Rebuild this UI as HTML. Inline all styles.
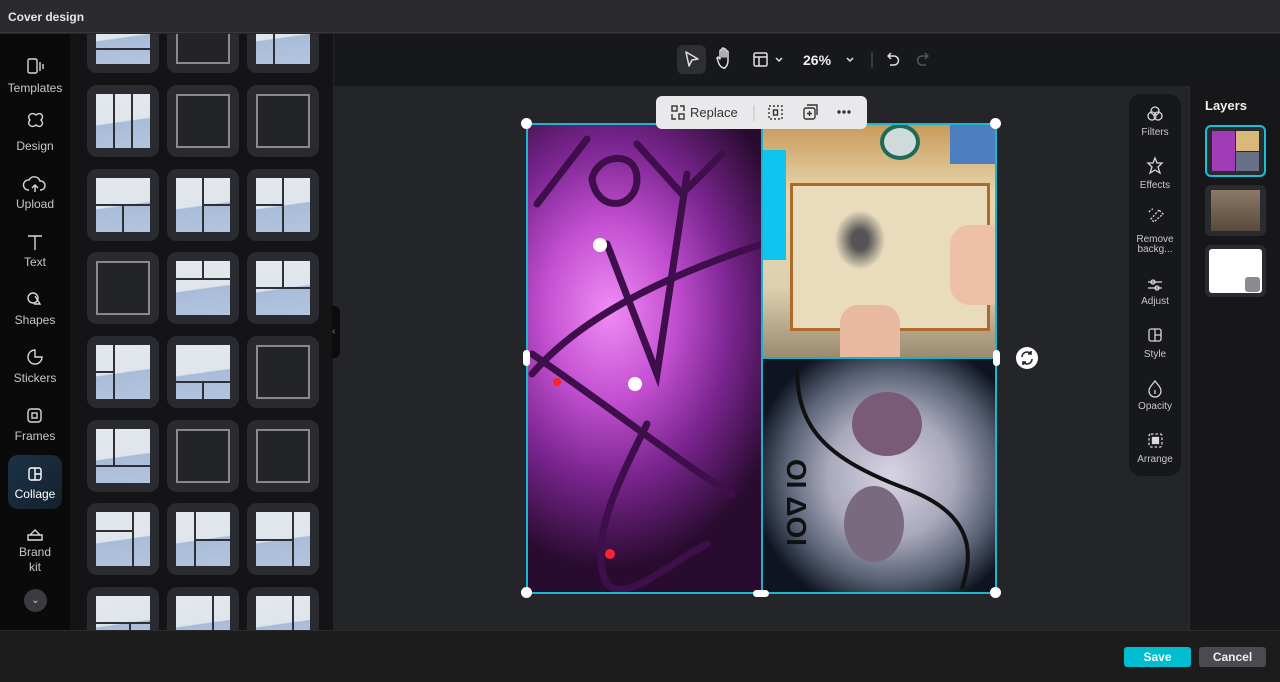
<!DOCTYPE html><html><head><meta charset="utf-8"><style>
*{box-sizing:border-box;margin:0;padding:0}
body{width:1280px;height:682px;overflow:hidden;background:#242529;font-family:"Liberation Sans",sans-serif;position:relative;color:#ddd}
.a{position:absolute}
.card{position:absolute;width:72px;height:72px;border-radius:10px;background:#2a2b30}
.th{position:absolute;left:9px;top:9px;width:54px;height:54px;overflow:hidden}
.sky{background:linear-gradient(172deg,#e4e8ee 0,#dfe5ec 50%,#a8bcda 52%,#b3c4de 100%)}
.emp{background:#232428;border:2px solid #8a8a8a}
.ln{position:absolute;background:#2e3035}
.v{width:2px;top:0;bottom:0}.h{height:2px;left:0;right:0}
.rl{position:absolute;left:0;width:70px;text-align:center;font-size:12px;color:#c8c8c8}
.tl{position:absolute;left:1129px;width:52px;text-align:center;font-size:10px;color:#c8c8c8;line-height:10px}
svg{position:absolute}
</style></head><body>
<div class="a" style="left:0;top:0;width:1280px;height:33px;background:#2b2b2f;border-bottom:1px solid #3a3a3e"></div>
<div class="a" style="left:8px;top:10px;font-size:12px;font-weight:bold;color:#e6e6e6">Cover design</div>
<div class="a" style="left:0;top:34px;width:70px;height:596px;background:#0a0a0b"></div>
<div class="a" style="left:8px;top:455px;width:54px;height:54px;border-radius:10px;background:linear-gradient(135deg,#1b3248,#15202c)"></div>
<svg width="70" height="596" style="left:0;top:34px" fill="none" stroke="#d8d8d8" stroke-width="1.4">
<rect x="28" y="25" width="9" height="14" rx="1.5"/><path d="M40 28v9M43 30v5"/>
<path d="M30 86c-4-4 2-9 6-5 4-4 9 1 5 5 4 4-1 9-5 5-4 4-10-1-6-5z"/>
<path d="M29 156h-1a5 5 0 0 1 1-10 6 6 0 0 1 11 1 4 4 0 0 1 1 9h-1M35 158v-7M32 154l3-3 3 3"/>
<path d="M28 202h14M35 202v14"/>
<circle cx="33" cy="264" r="5"/><path d="M35 262l5 8h-6"/>
<path d="M35 316a7 7 0 1 0 7 7h-7z"/>
<rect x="28" y="375" width="13" height="13" rx="3"/><rect x="32" y="379" width="5" height="5"/>
<rect x="29" y="434" width="12" height="12" rx="2" stroke="#fff"/><path d="M35 434v12M35 440h6" stroke="#fff"/>
<path d="M28 506h14v-5h-14zM30 501l5-5 5 5"/>
</svg>
<div class="rl" style="top:81px">Templates</div><div class="rl" style="top:139px">Design</div><div class="rl" style="top:197px">Upload</div><div class="rl" style="top:255px">Text</div><div class="rl" style="top:313px">Shapes</div><div class="rl" style="top:371px">Stickers</div><div class="rl" style="top:429px">Frames</div><div class="rl" style="top:487px;color:#fff">Collage</div><div class="rl" style="top:545px;line-height:15px">Brand<br>kit</div>
<div class="a" style="left:24px;top:589px;width:23px;height:23px;border-radius:50%;background:#3a3b40;color:#ccc;font-size:10px;text-align:center;line-height:23px">&#8964;</div>
<div class="a" style="left:70px;top:34px;width:263px;height:596px;background:#141417;overflow:hidden">
<div style="position:absolute;left:0;top:-34px;width:263px;height:700px">
<div class="card" style="left:17px;top:1px"><div class="th sky"><div class="ln h" style="top:38px"></div></div></div>
<div class="card" style="left:97px;top:1px"><div class="th emp"></div></div>
<div class="card" style="left:177px;top:1px"><div class="th sky"><div class="ln v" style="left:17px"></div></div></div>
<div class="card" style="left:17px;top:85px"><div class="th sky"><div class="ln v" style="left:17px"></div><div class="ln v" style="left:35px"></div></div></div>
<div class="card" style="left:97px;top:85px"><div class="th emp"></div></div>
<div class="card" style="left:177px;top:85px"><div class="th emp"></div></div>
<div class="card" style="left:17px;top:169px"><div class="th sky"><div class="ln h" style="top:26px"></div><div class="ln v" style="left:26px;top:26px"></div></div></div>
<div class="card" style="left:97px;top:169px"><div class="th sky"><div class="ln v" style="left:26px"></div><div class="ln h" style="top:26px;left:26px"></div></div></div>
<div class="card" style="left:177px;top:169px"><div class="th sky"><div class="ln v" style="left:26px"></div><div class="ln h" style="top:26px;right:28px"></div></div></div>
<div class="card" style="left:17px;top:252px"><div class="th emp"></div></div>
<div class="card" style="left:97px;top:252px"><div class="th sky"><div class="ln h" style="top:17px"></div><div class="ln v" style="left:26px;bottom:37px"></div></div></div>
<div class="card" style="left:177px;top:252px"><div class="th sky"><div class="ln v" style="left:26px;top:0;bottom:28px"></div><div class="ln h" style="top:26px"></div></div></div>
<div class="card" style="left:17px;top:336px"><div class="th sky"><div class="ln v" style="left:17px"></div><div class="ln h" style="top:26px;right:37px"></div></div></div>
<div class="card" style="left:97px;top:336px"><div class="th sky"><div class="ln h" style="top:36px"></div><div class="ln v" style="left:26px;top:36px"></div></div></div>
<div class="card" style="left:177px;top:336px"><div class="th emp"></div></div>
<div class="card" style="left:17px;top:420px"><div class="th sky"><div class="ln v" style="left:17px;bottom:18px"></div><div class="ln h" style="top:36px"></div></div></div>
<div class="card" style="left:97px;top:420px"><div class="th emp"></div></div>
<div class="card" style="left:177px;top:420px"><div class="th emp"></div></div>
<div class="card" style="left:17px;top:503px"><div class="th sky"><div class="ln v" style="left:36px"></div><div class="ln h" style="top:18px;right:18px"></div></div></div>
<div class="card" style="left:97px;top:503px"><div class="th sky"><div class="ln v" style="left:18px"></div><div class="ln h" style="top:27px;left:18px"></div></div></div>
<div class="card" style="left:177px;top:503px"><div class="th sky"><div class="ln v" style="left:36px"></div><div class="ln h" style="top:27px;right:18px"></div></div></div>
<div class="card" style="left:17px;top:587px"><div class="th sky"><div class="ln h" style="top:26px"></div><div class="ln v" style="left:33px;top:26px"></div></div></div>
<div class="card" style="left:97px;top:587px"><div class="th sky"><div class="ln v" style="left:36px"></div></div></div>
<div class="card" style="left:177px;top:587px"><div class="th sky"><div class="ln v" style="left:36px"></div></div></div>
</div></div>
<div class="a" style="left:332px;top:306px;width:8px;height:52px;border-radius:0 6px 6px 0;background:#0c0c0d;color:#888;font-size:10px;line-height:52px">‹</div>
<div class="a" style="left:334px;top:34px;width:946px;height:52px;background:#17181b"></div>
<div class="a" style="left:677px;top:45px;width:29px;height:29px;border-radius:6px;background:#2e2f34"></div>
<svg width="300" height="40" style="left:675px;top:40px" fill="none" stroke="#e0e0e0" stroke-width="1.5" stroke-linejoin="round">
<path d="M11 12l12 7-6 1-3 6z"/>
<path d="M50 28c-4 0-6-3-7-7l-1-3 1-1 2 2v-8a1 1 0 0 1 2 0v6-8a1 1 0 0 1 2 0v8-7a1 1 0 0 1 2 0v7-5a1 1 0 0 1 2 0v8c0 5-2 8-5 8z"/>
<rect x="79" y="13" width="13" height="13" rx="1.5"/><path d="M79 17h13M84 17v9M101 18l3 3 3-3"/>
<path d="M172 18l3 3 3-3" />
<path d="M197 12v16" stroke="#444"/>
<path d="M213 16h6a4 4 0 0 1 0 9h-4M216 13l-3 3 3 3"/>
<path d="M253 16h-6a4 4 0 0 0 0 9h4M250 13l3 3-3 3" stroke="#555"/>
</svg>
<div class="a" style="left:803px;top:52px;font-size:14px;font-weight:bold;color:#eee">26%</div>
<div class="a" style="left:527px;top:124px;width:235px;height:468px;background:radial-gradient(ellipse 80% 55% at 35% 40%,#f08cf5 0,#c24fd0 35%,#7a2590 65%,#2a0b30 100%)"></div>
<svg width="235" height="468" style="left:527px;top:124px" fill="none" stroke="#3e0f4a" stroke-width="7" stroke-linecap="round">
<path d="M10 80L60 15M65 55c5-25 45-30 45 0s-40 35-45 0M110 20l45 50 40-40M80 120l50 130 30-200M5 250c60-70 170-110 230-130M5 230c60 40 150 110 200 140M120 300c-30 60-60 120-40 160 20 20 60-20 100-40"/>
<circle cx="73" cy="121" r="7" fill="#fff" stroke="none"/><circle cx="108" cy="260" r="7" fill="#fff" stroke="none"/><circle cx="30" cy="258" r="4" fill="#f22" stroke="none"/><circle cx="83" cy="430" r="5" fill="#f23" stroke="none"/>
</svg>
<div class="a" style="left:762px;top:124px;width:234px;height:234px;background:linear-gradient(180deg,#c89a5a 0,#e7d6ae 30%,#ddd0b0 70%,#9a8a70 100%)"></div>
<div class="a" style="left:762px;top:150px;width:24px;height:110px;background:#0fc4ee"></div>
<div class="a" style="left:950px;top:124px;width:46px;height:40px;background:#4d7fc0"></div>
<div class="a" style="left:880px;top:124px;width:40px;height:36px;border-radius:50%;background:#cfdada;border:4px solid #1e6b55"></div>
<div class="a" style="left:790px;top:183px;width:200px;height:148px;background:#e8dcbc;border:3px solid #b06a28"></div>
<div class="a" style="left:830px;top:205px;width:60px;height:70px;background:radial-gradient(#555 20%,transparent 60%)"></div>
<div class="a" style="left:840px;top:305px;width:60px;height:53px;border-radius:18px 18px 0 0;background:#e8b8a0"></div>
<div class="a" style="left:950px;top:225px;width:46px;height:80px;border-radius:20px 0 0 20px;background:#eec0a8"></div>
<div class="a" style="left:762px;top:359px;width:234px;height:233px;background:radial-gradient(ellipse 60% 60% at 55% 50%,#d8d4e4 0,#a9a8bc 45%,#5a6276 75%,#0e1420 100%)"></div>
<svg width="234" height="233" style="left:762px;top:359px" fill="none">
<path d="M35 10c0 60 30 90 110 120s60 80 55 100" stroke="#111" stroke-width="4"/>
<ellipse cx="125" cy="65" rx="35" ry="32" fill="#7b5a78"/><ellipse cx="112" cy="165" rx="30" ry="38" fill="#7a6a80"/>
<text x="0" y="0" transform="translate(25 100) rotate(90)" font-size="28" font-weight="bold" fill="#111" font-family="Liberation Sans">OI ΔOI</text>
</svg>
<div class="a" style="left:526px;top:123px;width:471px;height:471px;border:2px solid #1ab7d0"></div>
<div class="a" style="left:761px;top:124px;width:2px;height:468px;background:#17b3cc"></div>
<div class="a" style="left:762px;top:357px;width:235px;height:2px;background:#17b3cc"></div>
<div class="a" style="left:521px;top:118px;width:11px;height:11px;border-radius:50%;background:#fff"></div>
<div class="a" style="left:990px;top:118px;width:11px;height:11px;border-radius:50%;background:#fff"></div>
<div class="a" style="left:521px;top:587px;width:11px;height:11px;border-radius:50%;background:#fff"></div>
<div class="a" style="left:990px;top:587px;width:11px;height:11px;border-radius:50%;background:#fff"></div>
<div class="a" style="left:523px;top:350px;width:7px;height:16px;border-radius:4px;background:#fff"></div>
<div class="a" style="left:993px;top:350px;width:7px;height:16px;border-radius:4px;background:#fff"></div>
<div class="a" style="left:753px;top:590px;width:16px;height:7px;border-radius:4px;background:#fff"></div>
<div class="a" style="left:1016px;top:347px;width:22px;height:22px;border-radius:50%;background:#fff"></div>
<svg width="22" height="22" style="left:1016px;top:347px" fill="none" stroke="#222" stroke-width="1.6"><path d="M6 10a5 5 0 0 1 9-3M16 12a5 5 0 0 1-9 3M15 4v3h-3M7 18v-3h3"/></svg>
<div class="a" style="left:656px;top:96px;width:211px;height:33px;border-radius:6px;background:#e9e9ec"></div>
<svg width="211" height="33" style="left:656px;top:96px" fill="none" stroke="#333" stroke-width="1.4">
<rect x="16" y="10" width="5" height="5"/><rect x="23" y="18" width="5" height="5"/><path d="M16 18v5h4M28 15v-5h-4"/>
<rect x="113" y="10" width="13" height="13" stroke-dasharray="2 2"/><rect x="117.5" y="14" width="4" height="5"/>
<rect x="148" y="12" width="11" height="11" rx="2"/><path d="M151 9h10v10M153.5 15v5M151 17.5h5"/>
<circle cx="183" cy="16" r="1" fill="#333"/><circle cx="188" cy="16" r="1" fill="#333"/><circle cx="193" cy="16" r="1" fill="#333"/>
<path d="M98 9v16" stroke="#ccc"/>
</svg>
<div class="a" style="left:690px;top:105px;font-size:13px;color:#333">Replace</div>
<div class="a" style="left:1129px;top:94px;width:52px;height:382px;border-radius:12px;background:#17181b"></div>
<svg width="52" height="382" style="left:1129px;top:94px" fill="none" stroke="#d8d8d8" stroke-width="1.3">
<circle cx="26" cy="17" r="4"/><circle cx="23" cy="22" r="4"/><circle cx="29" cy="22" r="4"/>
<path d="M26 64l2 5 5 0-4 4 2 6-5-3-5 3 2-6-4-4 5 0z"/>
<path d="M30 116l-8 9 3 3 9-8zM20 118a7 7 0 0 1 4-3" stroke-dasharray="2 1.5"/>
<path d="M19 188h14M19 194h14"/><circle cx="24" cy="188" r="2"/><circle cx="28" cy="194" r="2"/>
<rect x="20" y="235" width="12" height="12" rx="2"/><path d="M26 235v12M26 241h6"/>
<path d="M26 287c-4 5-6 7-6 10a6 6 0 0 0 12 0c0-3-2-5-6-10zM26 296v4"/>
<rect x="20" y="340" width="13" height="13" rx="2" stroke-dasharray="2.5 2"/><rect x="23.5" y="343.5" width="6" height="6" fill="#ddd"/>
</svg>
<div class="tl" style="top:128px">Filters</div><div class="tl" style="top:181px">Effects</div><div class="tl" style="top:235px">Remove<br>backg...</div><div class="tl" style="top:297px">Adjust</div><div class="tl" style="top:350px">Style</div><div class="tl" style="top:402px">Opacity</div><div class="tl" style="top:455px">Arrange</div>
<div class="a" style="left:1189px;top:86px;width:91px;height:544px;background:#17171a;border-left:1px solid #2c2d31"></div>
<div class="a" style="left:1205px;top:98px;font-size:13px;font-weight:bold;color:#eee">Layers</div>
<div class="a" style="left:1205px;top:125px;width:61px;height:52px;border-radius:6px;border:2px solid #1ac0d6;background:#2a2b30;padding:4px 5px">
<div style="display:flex;height:100%;gap:1px"><div style="flex:1;background:#a23bb8"></div><div style="flex:1;display:flex;flex-direction:column;gap:1px"><div style="flex:1;background:#d9b97a"></div><div style="flex:1;background:#6a7088"></div></div></div></div>
<div class="a" style="left:1205px;top:185px;width:61px;height:51px;border-radius:6px;background:#2a2b30;padding:5px 6px"><div style="height:100%;background:linear-gradient(#8a7a66,#5a4a3c)"></div></div>
<div class="a" style="left:1205px;top:245px;width:61px;height:52px;border-radius:6px;background:#2a2b30;padding:4px"><div style="height:100%;background:#fff;border-radius:3px"></div></div>
<div class="a" style="left:1245px;top:277px;width:15px;height:15px;border-radius:3px;background:#8a8b90"></div>
<div class="a" style="left:0;top:630px;width:1280px;height:52px;background:#1c1c1d;border-top:1px solid #2a2a2c"></div>
<div class="a" style="left:1124px;top:647px;width:67px;height:20px;border-radius:3px;background:#00bdd0;color:#fff;font-size:12px;font-weight:bold;text-align:center;line-height:20px">Save</div>
<div class="a" style="left:1199px;top:647px;width:67px;height:20px;border-radius:3px;background:#4a4b50;color:#eee;font-size:12px;font-weight:bold;text-align:center;line-height:20px">Cancel</div>
</body></html>
